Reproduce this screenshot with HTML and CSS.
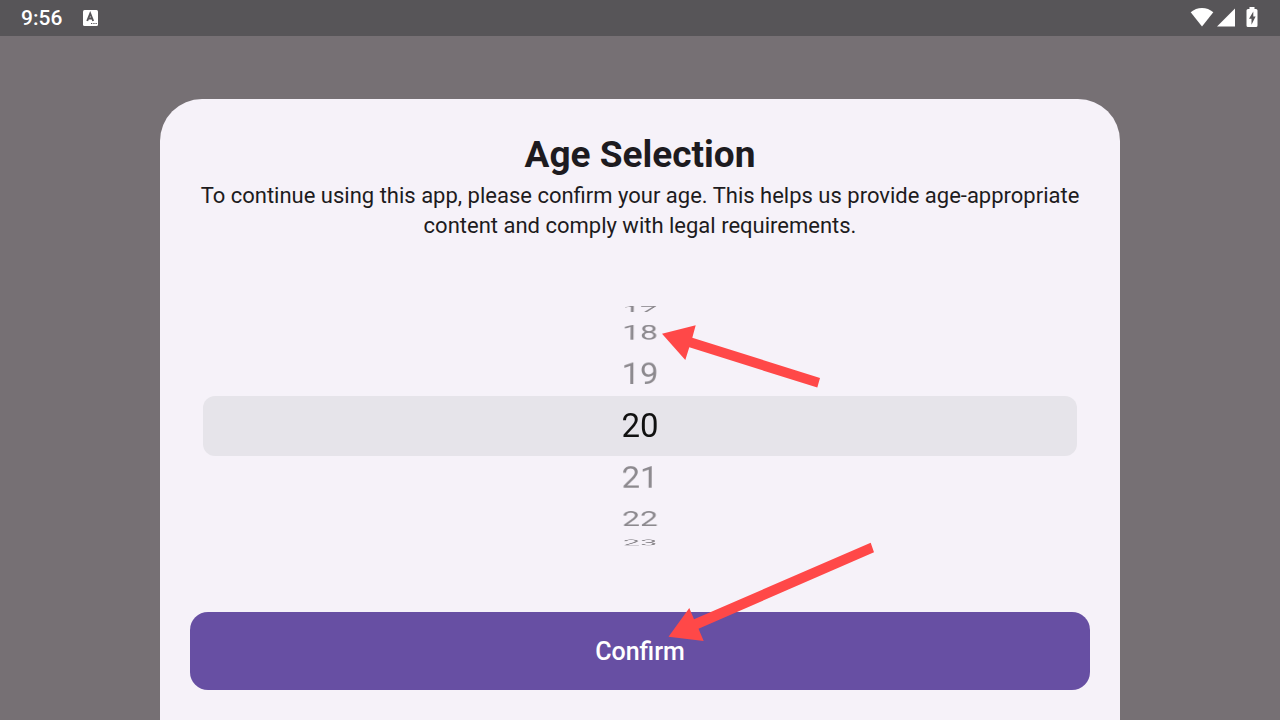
FILE: index.html
```
<!DOCTYPE html>
<html lang="en">
<head>
<meta charset="utf-8">
<title>Age Selection</title>
<meta name="viewport" content="width=device-width, initial-scale=1">
<link rel="stylesheet" href="styles.css">
</head>
<body class="screen">
<header class="status-bar">
  <div class="status-group">
    <time class="clock">9:56</time>
    <svg class="notice-icon" width="16" height="18" viewBox="0 0 16 18" aria-hidden="true">
      <rect x="0" y="1" width="15" height="16" rx="1.5" fill="#fff"/>
      <path d="M4.200 12 7.200 4.500 10.200 12M5.200 9.500H9.200" fill="none" stroke="#575558" stroke-width="1.900"/>
      <path d="M8 14.500h1.300M10.300 14.500h1.300M12.500 14.500h1.300" stroke="#575558" stroke-width="1.200"/>
    </svg>
  </div>
  <div class="status-group status-icons">
    <svg width="24" height="20" viewBox="0 0 24 20" aria-hidden="true">
      <path d="M12 19.500.700 5.300C4 2.500 7.800 1 12 1s8 1.500 11.300 4.300z" fill="#fff"/>
    </svg>
    <svg class="signal-icon" width="18" height="20" viewBox="0 0 18 20" aria-hidden="true">
      <path d="M0 19.500 18 1.500v18z" fill="#fff"/>
    </svg>
    <svg width="12" height="20" viewBox="0 0 12 20" aria-hidden="true">
      <path d="M3.500 0h5v2h1.500q1.500 0 1.500 1.500v15q0 1.500-1.500 1.500H2Q.500 20 .500 18.500v-15Q.500 2 2 2h1.500z" fill="#fff"/>
      <path d="M7.300 4.500 3 11.800h2.500v6L9.600 9.500H7.300z" fill="#575558"/>
    </svg>
  </div>
</header>
<main class="sheet">
  <h1 class="title">Age Selection</h1>
  <p class="lead">To continue using this app, please confirm your age. This helps us provide age-appropriate content and comply with legal requirements.</p>
  <div class="picker">
    <ul class="wheel" role="listbox" aria-label="Age">
      <li class="age up-3" role="option">17</li>
      <li class="age up-2" role="option">18</li>
      <li class="age up-1" role="option">19</li>
      <li class="age selected" role="option" aria-selected="true">20</li>
      <li class="age down-1" role="option">21</li>
      <li class="age down-2" role="option">22</li>
      <li class="age down-3" role="option">23</li>
    </ul>
  </div>
  <button class="confirm" type="button">Confirm</button>
</main>
<svg class="arrows" width="1280" height="720" viewBox="0 0 1280 720" aria-hidden="true">
  <path d="M662 333.700 695.700 325.300 692.300 337.700 820 378 817.300 387.500 689.300 347.300 685.300 360z"/>
  <path d="M668.500 636.700 689.300 608 694 619.300 870.700 542.700 874 552.300 698.500 628.700 703.700 641z"/>
</svg>
</body>
</html>
```
FILE: styles.css
```
* { box-sizing: border-box; }

.screen {
  position: relative;
  display: flex;
  flex-direction: column;
  min-height: 100vh;
  margin: 0;
  overflow-x: hidden;
  background: #767074;
  color: #1d1b20;
  font-family: Roboto, "Liberation Sans", sans-serif;
}

.status-bar {
  display: flex;
  align-items: center;
  justify-content: space-between;
  height: 36px;
  padding: 0 22px 0 21px;
  background: #575558;
  color: #fff;
}

.status-group {
  display: flex;
  align-items: center;
  gap: 21px;
}

.status-icons {
  gap: 3px;
  padding-bottom: 2px;
}

.signal-icon { margin-right: 8px; }

.clock {
  font-size: 21px;
  font-weight: 500;
  line-height: 38px;
}

.sheet {
  display: flex;
  flex: 1;
  flex-direction: column;
  width: 75%;
  margin: 63px auto 0;
  padding: 32px 30px 30px;
  border-radius: 42px 42px 0 0;
  background: #f6f2f9;
}

.title {
  margin: 0;
  font-size: 37px;
  font-weight: 700;
  line-height: 48px;
  text-align: center;
}

.lead {
  margin: 2px 0 0;
  font-size: 22px;
  line-height: 30px;
  text-align: center;
}

.picker {
  display: grid;
  align-items: center;
  height: 244px;
  margin: 63px 13px 64px;
  overflow: hidden;
}

.wheel {
  display: grid;
  margin: 0;
  padding: 0;
  border-radius: 12px;
  background: #e6e4ea;
  list-style: none;
  perspective: 1200px;
}

.age {
  grid-area: 1 / 1;
  color: #8c898e;
  font-size: 33px;
  line-height: 60px;
  text-align: center;
  transform-origin: 50% 50% -134px;
}

.selected { color: #111; }
.up-3 { transform: rotateX(69deg); }
.up-2 { transform: rotateX(46deg); }
.up-1 { transform: rotateX(23deg); }
.down-1 { transform: rotateX(-23deg); }
.down-2 { transform: rotateX(-46deg); }
.down-3 { transform: rotateX(-69deg); }

.confirm {
  height: 78px;
  border: 0;
  border-radius: 18px;
  background: #674fa3;
  color: #fff;
  font: 500 25px Roboto, "Liberation Sans", sans-serif;
}

.arrows {
  position: absolute;
  top: 0;
  left: 50%;
  margin-left: -640px;
  fill: #ff4848;
  pointer-events: none;
}
```
